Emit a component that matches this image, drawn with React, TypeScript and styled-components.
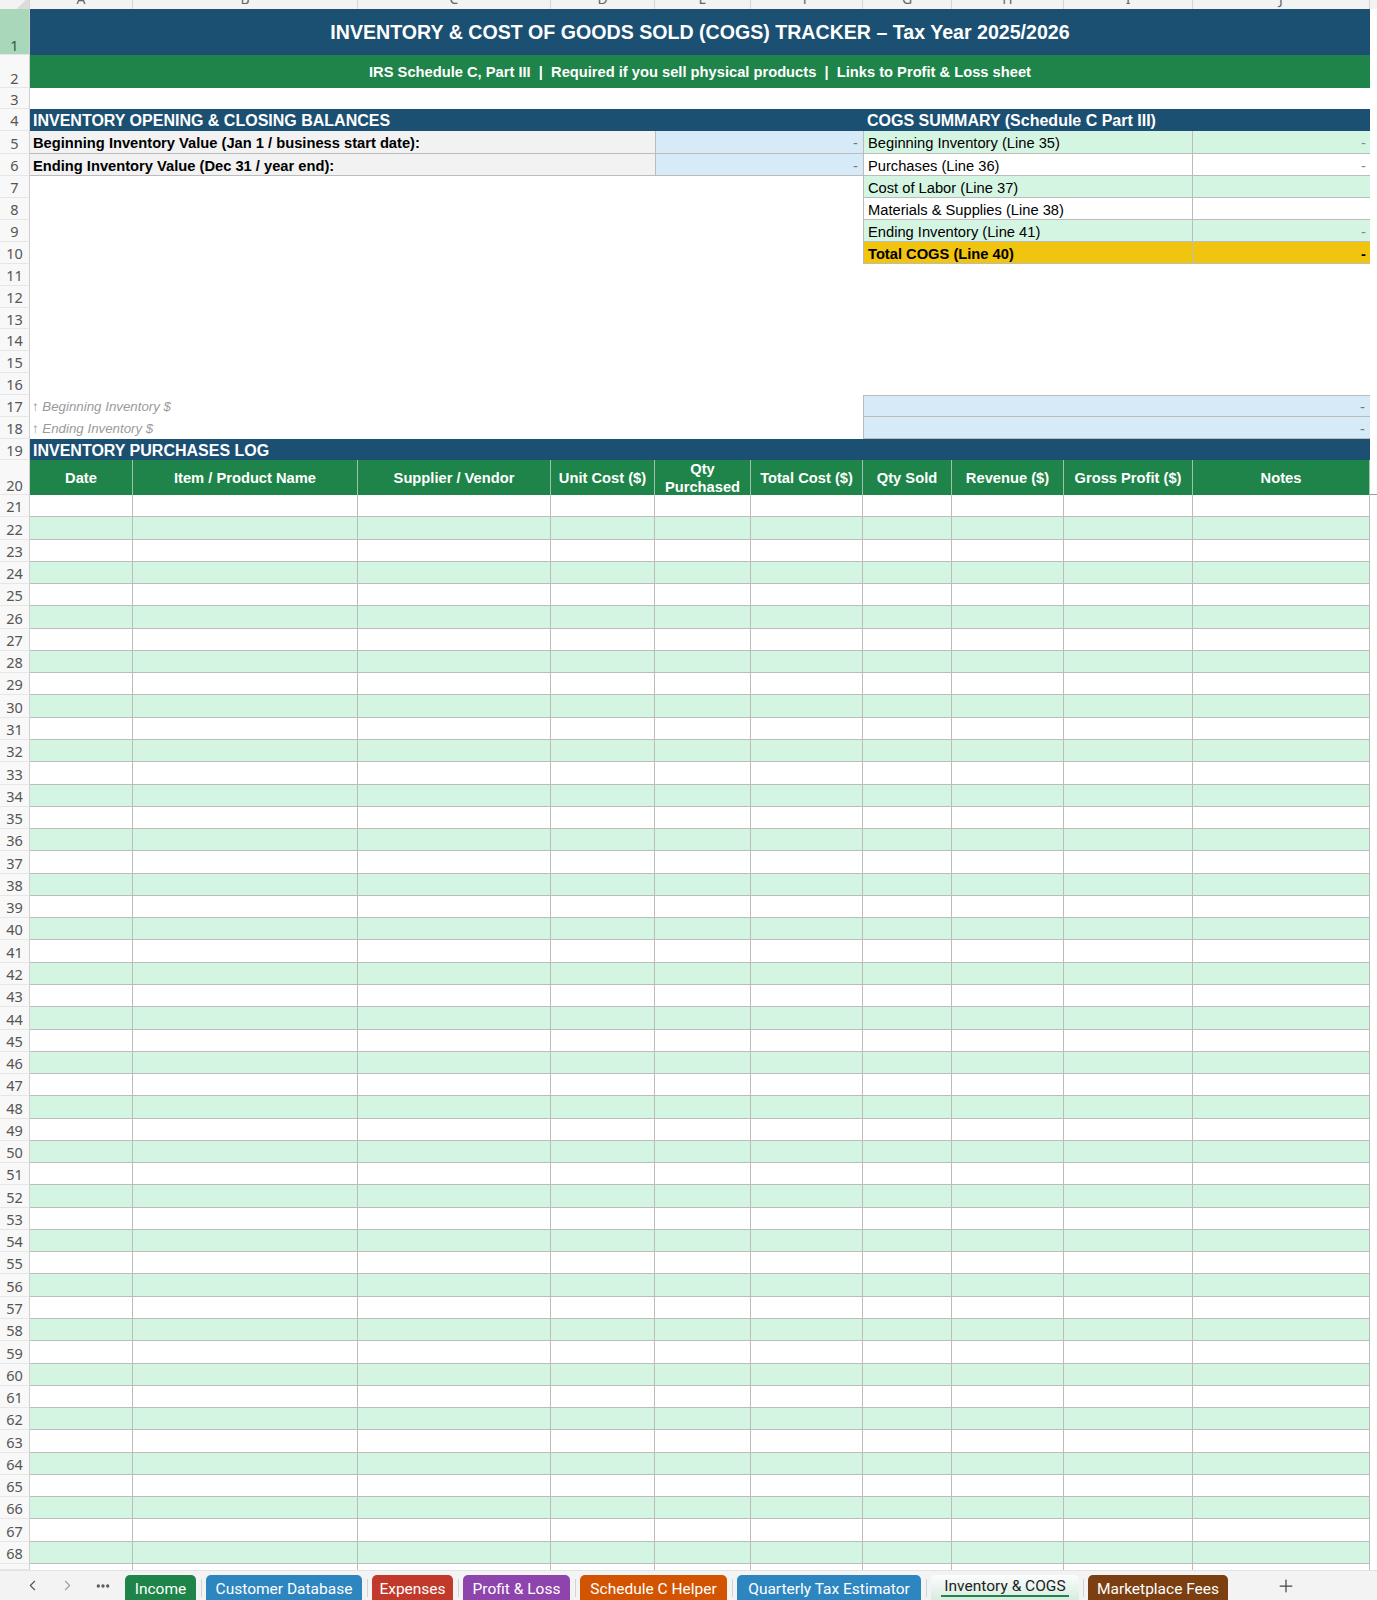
import React from "react";
import styled, { createGlobalStyle } from "styled-components";
import { ChevronLeft, ChevronRight, MoreHorizontal, Plus } from "lucide-react";

const COLS = "30px 103px 225px 193px 104px 96px 112px 89px 112px 129px 177px 1fr";

const C = {
  navy: "#1b5073",
  green: "#1f8449",
  mint: "#d5f5e3",
  sky: "#d6eaf8",
  grey: "#f2f2f2",
  gold: "#f1c40f",
  line: "#bcbcbc",
};

const GlobalStyle = createGlobalStyle`
  html, body { margin: 0; padding: 0; background: #fff; overflow: hidden; }
  body { font-family: "Liberation Sans", Arial, sans-serif; color: #000; }
  * { box-sizing: border-box; }
`;

const Page = styled.div`
  width: 1377px;
  height: 1600px;
  display: flex;
  flex-direction: column;
  overflow: hidden;
  background: #fff;
`;

const Sheet = styled.div`
  flex: 1 1 auto;
  display: flex;
  flex-direction: column;
  overflow: hidden;
`;

const ColHeader = styled.div`
  display: grid;
  grid-template-columns: ${COLS};
  height: 9px;
  flex: none;
  background: #f3f3f3;
  overflow: hidden;
`;

const Corner = styled.div`
  border-right: 1px solid #d6d6d6;
  background: linear-gradient(135deg, transparent 55%, #dcdcdc 55%);
`;

const ColLetter = styled.div`
  display: flex;
  justify-content: center;
  border-right: 1px solid #d6d6d6;
  color: #666;
  font-family: "Noto Sans", "Open Sans", sans-serif;
  font-size: 14px;
  line-height: 18px;
  span {
    transform: translateY(-10px);
  }
`;

const Row = styled.div<{ $h: number }>`
  display: grid;
  grid-template-columns: ${COLS};
  height: ${(p) => p.$h}px;
  flex: none;
`;

const RowNum = styled.div<{ $active?: boolean; $bottom?: boolean }>`
  grid-column: 1;
  display: flex;
  justify-content: center;
  align-items: ${(p) => (p.$bottom ? "flex-end" : "center")};
  padding-top: ${(p) => (p.$bottom ? "0" : "1px")};
  background: ${(p) => (p.$active ? "#a8d7b9" : "#f8f8f8")};
  color: ${(p) => (p.$active ? "#2a5d3d" : "#555")};
  border-right: 1px solid #cfcfcf;
  border-bottom: 1px solid #e6e6e6;
  font-family: "Noto Sans", "Open Sans", sans-serif;
  font-size: 14.5px;
  line-height: 18px;
  overflow: hidden;
`;

const Banner = styled.div<{ $bg: string; $size: number }>`
  grid-column: 2 / span 10;
  background: ${(p) => p.$bg};
  color: #fff;
  font-weight: 700;
  font-size: ${(p) => p.$size}px;
  display: flex;
  align-items: center;
  justify-content: center;
  padding-top: 1px;
  white-space: pre;
`;

const SectionBar = styled.div<{ $col: number; $span: number; $pad: number }>`
  grid-column: ${(p) => p.$col} / span ${(p) => p.$span};
  background: ${C.navy};
  color: #fff;
  font-weight: 700;
  font-size: 16px;
  display: flex;
  align-items: center;
  padding-left: ${(p) => p.$pad}px;
  padding-top: 2px;
  white-space: nowrap;
`;

const LabelCell = styled.div`
  grid-column: 2 / span 4;
  background: ${C.grey};
  border-bottom: 1px solid ${C.line};
  font-weight: 700;
  font-size: 14.7px;
  display: flex;
  align-items: center;
  padding-left: 3px;
  padding-top: 2px;
  white-space: nowrap;
`;

const InputCell = styled.div<{ $col: number; $span: number; $top?: boolean }>`
  grid-column: ${(p) => p.$col} / span ${(p) => p.$span};
  background: ${C.sky};
  border-left: 1px solid ${C.line};
  border-bottom: 1px solid ${C.line};
  border-top: ${(p) => (p.$top ? `1px solid ${C.line}` : "none")};
  color: #777;
  font-size: 14.7px;
  display: flex;
  align-items: center;
  justify-content: flex-end;
  padding-right: 5px;
  padding-top: 2px;
`;

type Tone = "mint" | "white" | "gold";
const toneBg = (t: Tone) => (t === "mint" ? C.mint : t === "gold" ? C.gold : "#fff");

const SummaryLabel = styled.div<{ $tone: Tone }>`
  grid-column: 8 / span 3;
  background: ${(p) => toneBg(p.$tone)};
  border-left: 1px solid ${C.line};
  border-right: 1px solid ${C.line};
  border-bottom: 1px solid ${C.line};
  font-size: 14.7px;
  font-weight: ${(p) => (p.$tone === "gold" ? 700 : 400)};
  display: flex;
  align-items: center;
  padding-left: 4px;
  padding-top: 2px;
  white-space: nowrap;
`;

const SummaryValue = styled.div<{ $tone: Tone }>`
  grid-column: 11;
  background: ${(p) => toneBg(p.$tone)};
  border-bottom: 1px solid ${C.line};
  font-size: 14.7px;
  font-weight: ${(p) => (p.$tone === "gold" ? 700 : 400)};
  color: ${(p) => (p.$tone === "gold" ? "#000" : "#888")};
  display: flex;
  align-items: center;
  justify-content: flex-end;
  padding-right: 4px;
  padding-top: 2px;
`;

const NoteCell = styled.div`
  grid-column: 2 / span 6;
  color: #9a9a9a;
  font-style: italic;
  font-size: 13.3px;
  display: flex;
  align-items: center;
  padding-left: 2px;
  padding-top: 1px;
  white-space: nowrap;
`;

const HeadCell = styled.div`
  background: ${C.green};
  color: #fff;
  font-weight: 700;
  font-size: 14.7px;
  line-height: 18px;
  display: flex;
  align-items: center;
  justify-content: center;
  text-align: center;
  border-right: 1px solid #9dc3ac;
  padding: 1px 4px 0;
  overflow: hidden;
`;

const HeadEdge = styled.div`
  border-bottom: 1px solid #9a9a9a;
`;

const DataCell = styled.div<{ $alt: boolean; $open?: boolean }>`
  background: ${(p) => (p.$alt ? C.mint : "#fff")};
  border-right: 1px solid ${C.line};
  border-bottom: ${(p) => (p.$open ? "none" : `1px solid ${C.line}`)};
`;

const TabBar = styled.div`
  height: 30px;
  flex: none;
  background: #f3f3f3;
  border-top: 1px solid #e2e2e2;
  display: flex;
  align-items: flex-end;
  padding-left: 15px;
`;

const NavBtn = styled.div<{ $dim?: boolean }>`
  width: 35px;
  height: 29px;
  display: flex;
  align-items: center;
  justify-content: center;
  color: ${(p) => (p.$dim ? "#a0a0a0" : "#555")};
`;

const TabList = styled.div`
  display: flex;
  align-items: flex-end;
  margin-left: 5px;
`;

const Tab = styled.div<{ $bg: string; $w: number; $active?: boolean }>`
  position: relative;
  width: ${(p) => p.$w}px;
  height: 25px;
  border-radius: 5px 5px 0 0;
  background: ${(p) => (p.$active ? "linear-gradient(#fbfdfc, #d8ece1)" : p.$bg)};
  color: ${(p) => (p.$active ? "#222" : "#fff")};
  font-family: Roboto, "Noto Sans", sans-serif;
  font-size: 15.5px;
  display: flex;
  align-items: ${(p) => (p.$active ? "flex-start" : "center")};
  padding-top: 2px;
  justify-content: center;
  white-space: nowrap;
  &::after {
    content: "";
    display: ${(p) => (p.$active ? "block" : "none")};
    position: absolute;
    left: 10px;
    right: 10px;
    bottom: 3px;
    height: 2px;
    background: ${C.green};
  }
`;

const TabSep = styled.div<{ $w: number }>`
  width: ${(p) => p.$w}px;
  height: 25px;
  display: flex;
  justify-content: center;
  align-items: center;
  &::before {
    content: "";
    width: 1px;
    height: 18px;
    background: #d3d3d3;
  }
`;

const PlusBtn = styled.div`
  width: 30px;
  height: 29px;
  margin-left: 43px;
  display: flex;
  align-items: center;
  justify-content: center;
  color: #444;
`;

/* ---------- data ---------- */

const LETTERS = ["A", "B", "C", "D", "E", "F", "G", "H", "I", "J"];

const split = (start: number, end: number, n: number) =>
  Array.from(
    { length: n },
    (_, i) => Math.round(start + ((end - start) * (i + 1)) / n) - Math.round(start + ((end - start) * i) / n)
  );

const midHeights = split(176, 439, 12); // rows 7..18
const logHeights = split(495, 1564, 48); // rows 21..68

const summary: { label: string; value: string; tone: Tone }[] = [
  { label: "Beginning Inventory (Line 35)", value: "-", tone: "mint" },
  { label: "Purchases (Line 36)", value: "-", tone: "white" },
  { label: "Cost of Labor (Line 37)", value: "", tone: "mint" },
  { label: "Materials & Supplies (Line 38)", value: "", tone: "white" },
  { label: "Ending Inventory (Line 41)", value: "-", tone: "mint" },
  { label: "Total COGS (Line 40)", value: "-", tone: "gold" },
];

const headers = [
  "Date",
  "Item / Product Name",
  "Supplier / Vendor",
  "Unit Cost ($)",
  "Qty Purchased",
  "Total Cost ($)",
  "Qty Sold",
  "Revenue ($)",
  "Gross Profit ($)",
  "Notes",
];

const tabs = [
  { name: "Income", bg: "#1e8449", w: 71 },
  { name: "Customer Database", bg: "#2e86c1", w: 156 },
  { name: "Expenses", bg: "#c0392b", w: 81 },
  { name: "Profit & Loss", bg: "#8e44ad", w: 107 },
  { name: "Schedule C Helper", bg: "#d35400", w: 147 },
  { name: "Quarterly Tax Estimator", bg: "#2e86c1", w: 184 },
  { name: "Inventory & COGS", bg: "#ffffff", w: 148, active: true },
  { name: "Marketplace Fees", bg: "#7b3f12", w: 140 },
];

export default function App() {
  return (
    <Page>
      <GlobalStyle />
      <Sheet>
        <ColHeader>
          <Corner />
          {LETTERS.map((l) => (
            <ColLetter key={l}>
              <span>{l}</span>
            </ColLetter>
          ))}
        </ColHeader>

        <Row $h={46}>
          <RowNum $active $bottom>1</RowNum>
          <Banner $bg={C.navy} $size={19.6}>
            INVENTORY &amp; COST OF GOODS SOLD (COGS) TRACKER – Tax Year 2025/2026
          </Banner>
        </Row>
        <Row $h={33}>
          <RowNum $bottom>2</RowNum>
          <Banner $bg={C.green} $size={14.7}>
            {"IRS Schedule C, Part III  |  Required if you sell physical products  |  Links to Profit & Loss sheet"}
          </Banner>
        </Row>
        <Row $h={21}>
          <RowNum>3</RowNum>
        </Row>
        <Row $h={22}>
          <RowNum>4</RowNum>
          <SectionBar $col={2} $span={6} $pad={3}>
            INVENTORY OPENING &amp; CLOSING BALANCES
          </SectionBar>
          <SectionBar $col={8} $span={4} $pad={4}>
            COGS SUMMARY (Schedule C Part III)
          </SectionBar>
        </Row>

        {[
          { n: 5, h: 23, label: "Beginning Inventory Value (Jan 1 / business start date):" },
          { n: 6, h: 22, label: "Ending Inventory Value (Dec 31 / year end):" },
        ].map((r, i) => (
          <Row key={r.n} $h={r.h}>
            <RowNum>{r.n}</RowNum>
            <LabelCell>{r.label}</LabelCell>
            <InputCell $col={6} $span={2}>-</InputCell>
            <SummaryLabel $tone={summary[i].tone}>{summary[i].label}</SummaryLabel>
            <SummaryValue $tone={summary[i].tone}>{summary[i].value}</SummaryValue>
          </Row>
        ))}

        {midHeights.map((h, i) => {
          const n = 7 + i;
          const s = summary[n - 5];
          return (
            <Row key={n} $h={h}>
              <RowNum>{n}</RowNum>
              {s && (
                <>
                  <SummaryLabel $tone={s.tone}>{s.label}</SummaryLabel>
                  <SummaryValue $tone={s.tone}>{s.value}</SummaryValue>
                </>
              )}
              {n === 17 && (
                <>
                  <NoteCell>↑ Beginning Inventory $</NoteCell>
                  <InputCell $col={8} $span={4} $top>-</InputCell>
                </>
              )}
              {n === 18 && (
                <>
                  <NoteCell>↑ Ending Inventory $</NoteCell>
                  <InputCell $col={8} $span={4}>-</InputCell>
                </>
              )}
            </Row>
          );
        })}

        <Row $h={21}>
          <RowNum>19</RowNum>
          <SectionBar $col={2} $span={10} $pad={3}>
            INVENTORY PURCHASES LOG
          </SectionBar>
        </Row>
        <Row $h={35}>
          <RowNum $bottom>20</RowNum>
          {headers.map((t) => (
            <HeadCell key={t}>{t}</HeadCell>
          ))}
          <HeadEdge />
        </Row>

        {logHeights.map((h, i) => {
          const n = 21 + i;
          const alt = n % 2 === 0;
          return (
            <Row key={n} $h={h}>
              <RowNum>{n}</RowNum>
              {headers.map((t) => (
                <DataCell key={t} $alt={alt} />
              ))}
            </Row>
          );
        })}
        <Row $h={6}>
          <RowNum />
          {headers.map((t) => (
            <DataCell key={t} $alt={false} $open />
          ))}
        </Row>
      </Sheet>

      <TabBar>
        <NavBtn>
          <ChevronLeft size={17} strokeWidth={1.6} />
        </NavBtn>
        <NavBtn $dim>
          <ChevronRight size={17} strokeWidth={1.6} />
        </NavBtn>
        <NavBtn>
          <MoreHorizontal size={16} strokeWidth={3} />
        </NavBtn>
        <TabList>
          {tabs.map((t, i) => (
            <React.Fragment key={t.name}>
              {i > 0 && <TabSep $w={i === 7 ? 9 : 10} />}
              <Tab $bg={t.bg} $w={t.w} $active={t.active}>
                {t.name}
              </Tab>
            </React.Fragment>
          ))}
        </TabList>
        <PlusBtn>
          <Plus size={20} strokeWidth={1.5} />
        </PlusBtn>
      </TabBar>
    </Page>
  );
}
